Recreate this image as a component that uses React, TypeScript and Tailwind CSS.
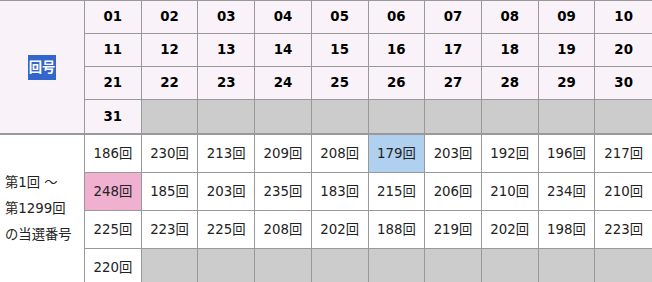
import React from 'react'

const counts = [
    ['186', '230', '213', '209', '208', '179', '203', '192', '196', '217'],
    ['248', '185', '203', '235', '183', '215', '206', '210', '234', '210'],
    ['225', '223', '225', '208', '202', '188', '219', '202', '198', '223'],
    ['220'],
]

const pad = (n: number) => (n < 10 ? '0' + n : String(n))

export default function App() {
    const days: (string | null)[] = []
    for (let i = 1; i <= 40; i++) days.push(i <= 31 ? pad(i) : null)

    const results: { v: string | null; bg: string }[] = []
    counts.forEach((row, r) => {
        for (let c = 0; c < 10; c++) {
            const v = row[c] ?? null
            let bg = v ? 'bg-white' : 'bg-[#cccccc]'
            if (r === 0 && c === 5) bg = 'bg-[#b0d0f0]'
            if (r === 1 && c === 0) bg = 'bg-[#f0b0d0]'
            results.push({ v, bg })
        }
    })

    return (
        <div
            className="w-[652px] h-[282px] overflow-hidden bg-white text-[13.33px] text-black"
            style={{ fontFamily: '"DejaVu Sans", "Noto Sans CJK JP", sans-serif' }}
        >
            {/* 回号 */}
            <div className="grid grid-cols-[85px_repeat(10,minmax(0,1fr))] border-t border-b border-[#999999] bg-[#f9f3f9]">
                <div className="row-span-4 flex items-center justify-center border-r border-[#999999]">
                    <span className="bg-[#3366cc] text-white font-bold px-px leading-[25px]">回号</span>
                </div>
                {days.map((d, i) => (
                    <div
                        key={i}
                        className={`h-[33px] flex items-center justify-center font-bold border-b border-[#999999] ${
                            i % 10 === 9 ? '' : 'border-r'
                        } ${i >= 30 ? 'border-b-0 h-[32px]' : ''} ${d ? '' : 'bg-[#cccccc]'}`}
                    >
                        {d}
                    </div>
                ))}
            </div>

            {/* 当選番号 */}
            <div className="grid grid-cols-[85px_repeat(10,minmax(0,1fr))] border-t border-[#999999]">
                <div className="row-span-4 flex items-center border-r border-[#999999] pl-[5px] pb-[5px] leading-[26px] text-[#222222]">
                    <p>
                        第1回 ～<br />
                        第1299回<br />
                        の当選番号
                    </p>
                </div>
                {results.map((cell, i) => (
                    <div
                        key={i}
                        className={`h-[38px] flex items-center justify-center text-[#222222] border-b border-[#999999] ${
                            i % 10 === 9 ? '' : 'border-r'
                        } ${cell.bg}`}
                    >
                        {cell.v ? cell.v + '回' : null}
                    </div>
                ))}
            </div>
        </div>
    )
}
